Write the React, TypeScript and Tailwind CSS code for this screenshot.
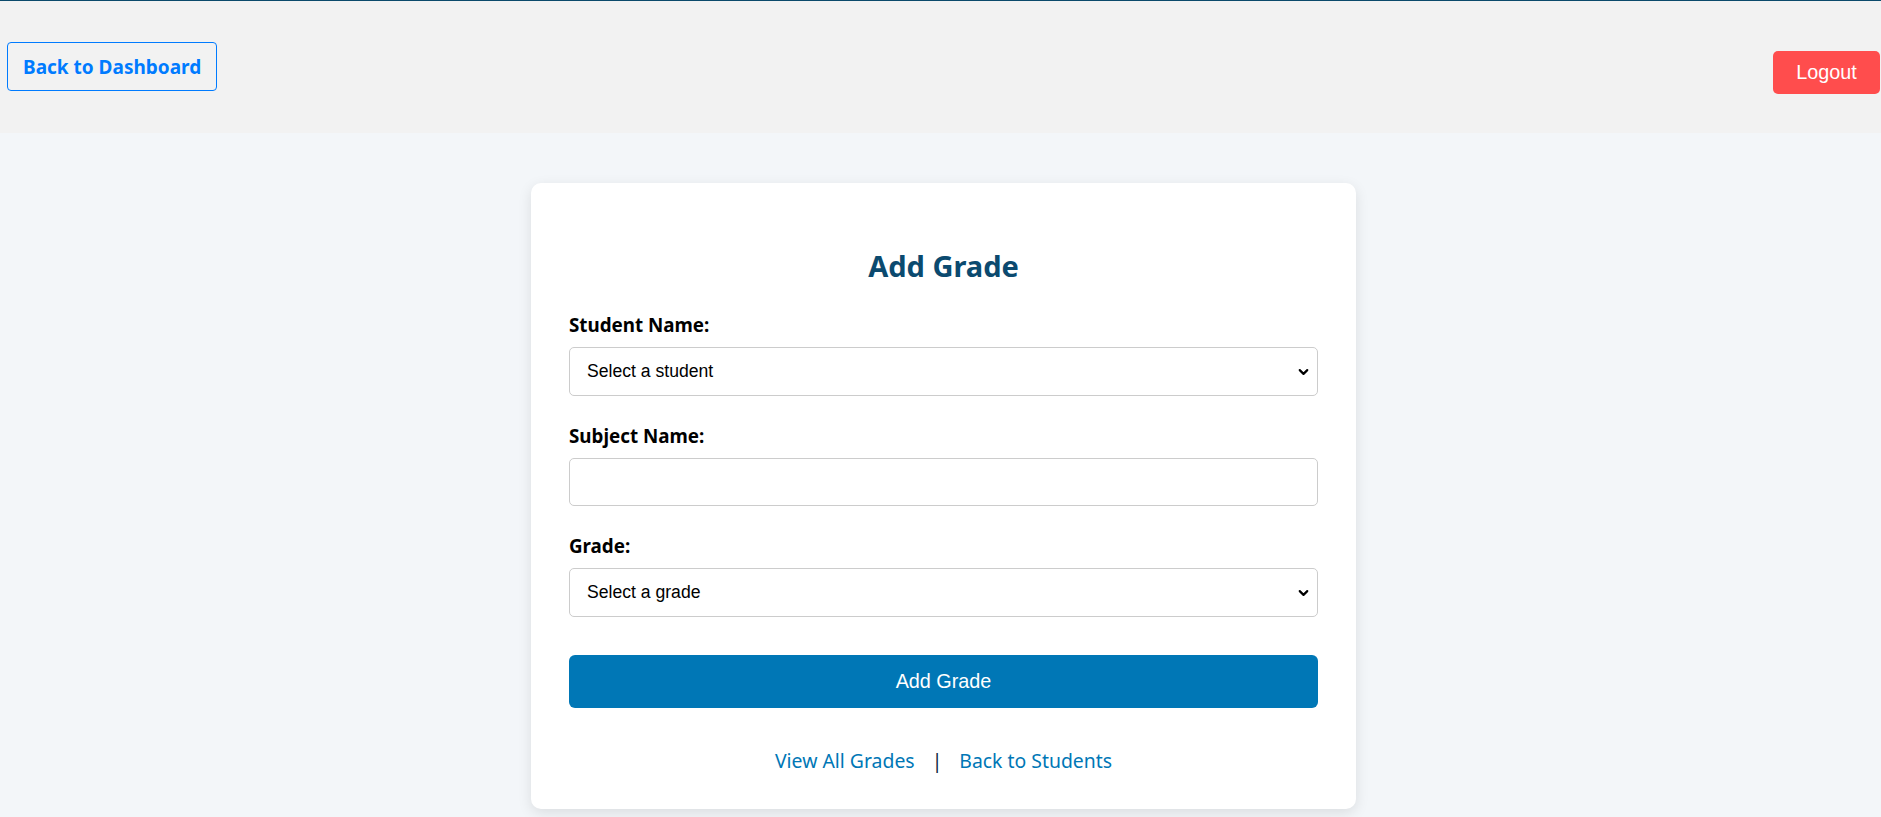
import { ChevronDown } from 'lucide-react'

const segoe = 'font-["Segoe_UI","Noto_Sans",sans-serif]'
const arial = 'font-["Liberation_Sans",Arial,sans-serif]'

function Field({ label, children }: { label: string; children: React.ReactNode }) {
  return (
    <div className="mb-[26px]">
      <label className={`${segoe} block h-[28px] text-[18.8px] leading-[28px] font-bold text-black`}>{label}</label>
      <div className="relative mt-[8px]">{children}</div>
    </div>
  )
}

function Select({ placeholder }: { placeholder: string }) {
  return (
    <>
      <select
        className={`${arial} h-[49px] w-full appearance-none rounded-[5px] border border-[#cccccc] bg-white pl-[17px] text-[17.6px] text-black outline-none`}
        defaultValue="">
        <option value="">{placeholder}</option>
      </select>
      <ChevronDown
        className="pointer-events-none absolute top-1/2 right-[7px] h-[15px] w-[15px] -translate-y-1/2 text-black"
        strokeWidth={3.5}
      />
    </>
  )
}

export default function App() {
  return (
    <div className="min-h-[817px] bg-[#f3f6f9]">
      <header className="flex h-[133px] justify-between border-t border-[#0b4a6b] bg-[#f2f2f2] pr-[1px] pl-[7px]">
        <button
          className={`${segoe} mt-[41px] h-[49px] rounded-[4px] border border-[#007bff] px-[15px] pt-[2px] text-[19px] font-bold text-[#007bff]`}>
          Back to Dashboard
        </button>
        <button
          className={`${arial} mt-[50px] h-[43px] w-[107px] rounded-[5px] bg-[#ff4d4d] text-[19.8px] text-white`}>
          Logout
        </button>
      </header>

      <main className="pt-[50px] pb-[8px]">
        <div className="mx-auto w-[825px] translate-x-[3px] rounded-[10px] bg-white px-[38px] pt-[63px] pb-[34px] shadow-[0_4px_14px_rgba(0,0,0,0.1)]">
          <h2 className={`${segoe} mb-[25px] h-[40px] text-center text-[29px] leading-[40px] font-bold text-[#0b4a6f]`}>
            Add Grade
          </h2>

          <form>
            <Field label="Student Name:">
              <Select placeholder="Select a student" />
            </Field>
            <Field label="Subject Name:">
              <input
                className={`${arial} h-[48px] w-full rounded-[5px] border border-[#cccccc] bg-white px-[17px] text-[17.6px] outline-none`}
                type="text"
              />
            </Field>
            <Field label="Grade:">
              <Select placeholder="Select a grade" />
            </Field>

            <button
              className={`${arial} mt-[12px] h-[53px] w-full rounded-[6px] bg-[#0077b6] text-[19.8px] text-white`}
              type="button">
              Add Grade
            </button>
          </form>

          <div className={`${segoe} mt-[39px] flex h-[28px] items-center justify-center gap-[17px] text-[19.4px] leading-[28px]`}>
            <a className="text-[#0077b6]" href="#">View All Grades</a>
            <span className="text-[#0a2540]">|</span>
            <a className="text-[#0077b6]" href="#">Back to Students</a>
          </div>
        </div>
      </main>
    </div>
  )
}
